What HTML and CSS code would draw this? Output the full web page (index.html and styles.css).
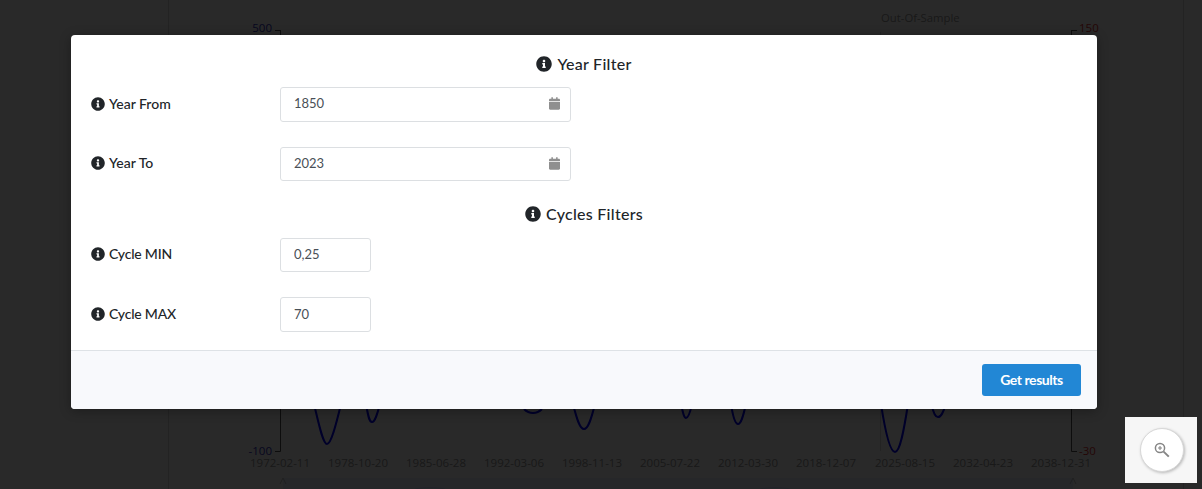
FILE: index.html
```html
<!DOCTYPE html>
<html lang="en">
<head>
<meta charset="utf-8">
<title>Year Filter</title>
<link rel="stylesheet" href="styles.css">
</head>
<body>
<svg class="sprite" width="0" height="0" aria-hidden="true">
  <symbol id="info" viewBox="0 0 512 512"><path d="M256 8C119.043 8 8 119.083 8 256c0 136.997 111.043 248 248 248s248-111.003 248-248C504 119.083 392.957 8 256 8zm0 110c23.196 0 42 18.804 42 42s-18.804 42-42 42-42-18.804-42-42 18.804-42 42-42zm56 254c0 6.627-5.373 12-12 12h-88c-6.627 0-12-5.373-12-12v-24c0-6.627 5.373-12 12-12h12v-64h-12c-6.627 0-12-5.373-12-12v-24c0-6.627 5.373-12 12-12h64c6.627 0 12 5.373 12 12v100h12c6.627 0 12 5.373 12 12v24z"/></symbol>
  <symbol id="calendar" viewBox="0 0 448 512"><path d="M12 192h424c6.6 0 12 5.4 12 12v260c0 26.5-21.5 48-48 48H48c-26.5 0-48-21.5-48-48V204c0-6.6 5.4-12 12-12zm436-44v-36c0-26.5-21.5-48-48-48h-48V12c0-6.6-5.4-12-12-12h-40c-6.6 0-12 5.4-12 12v52H160V12c0-6.6-5.4-12-12-12h-40c-6.6 0-12 5.4-12 12v52H48C21.5 64 0 85.5 0 112v36c0 6.6 5.4 12 12 12h424c6.6 0 12-5.4 12-12z"/></symbol>
</svg>

<svg class="chart" width="1202" height="489" viewBox="0 0 1202 489">
  <g class="navigator">
    <path class="nav-area" d="M283 489V478H1073V489Z"/>
    <path class="nav-handle" d="M283 478L280 484M283 478L286 484M1073 478L1070 484M1073 478L1076 484"/>
    <path class="nav-line" d="M415 489C425 487 435 487 445 489M760 489C770 487 780 487 790 489"/>
  </g>
  <path class="faint" d="M168.5 0V489M1183.5 0V489M880.5 32V451"/>
  <path class="axis" d="M280.5 30V451.5H275M275 30.5H280.5M1071.5 30V451.5H1077M1071.5 30.5H1077"/>
  <g class="curve">
    <path d="M314 404C319 425 323 444 327 444C331 444 336 425 341 404"/>
    <path d="M366 404C368 415 369 422 372 422C375 422 377 415 380 404"/>
    <path d="M524 409C527 412 530 413 533 413C536 413 539 412 542 409"/>
    <path d="M573 404C577 420 580 429 584 429C588 429 591 420 595 404"/>
    <path d="M681 404C683 413 684 418 686 418C688 418 690 413 692 404"/>
    <path d="M731 404C733 417 735 424 738 424C741 424 743 417 746 404"/>
    <path d="M881 404C885 430 890 452 895 452C900 452 904 430 908 404"/>
    <path d="M931 404C934 413 935 417 938 417C941 417 943 413 946 404"/>
  </g>
  <text class="t t-left" x="272" y="32">500</text>
  <text class="t t-left" x="272" y="455">-100</text>
  <text class="t t-right" x="1079" y="32">150</text>
  <text class="t t-right" x="1079" y="455">-30</text>
  <text class="t t-title" x="881" y="22">Out-Of-Sample</text>
  <g class="t">
    <text x="250" y="467">1972-02-11</text>
    <text x="328" y="467">1978-10-20</text>
    <text x="406" y="467">1985-06-28</text>
    <text x="484" y="467">1992-03-06</text>
    <text x="562" y="467">1998-11-13</text>
    <text x="640" y="467">2005-07-22</text>
    <text x="718" y="467">2012-03-30</text>
    <text x="796" y="467">2018-12-07</text>
    <text x="875" y="467">2025-08-15</text>
    <text x="953" y="467">2032-04-23</text>
    <text x="1031" y="467">2038-12-31</text>
  </g>
</svg>

<div class="backdrop"></div>

<main class="modal">
  <div class="modal-body">
    <h2 class="section-title"><svg class="info info-lg"><use href="#info"/></svg>Year Filter</h2>
    <div class="field field-first">
      <label class="label"><svg class="info"><use href="#info"/></svg>Year From</label>
      <div class="control control-date">
        <input class="input" type="text" value="1850">
        <svg class="cal"><use href="#calendar"/></svg>
      </div>
    </div>
    <div class="field field-second">
      <label class="label"><svg class="info"><use href="#info"/></svg>Year To</label>
      <div class="control control-date">
        <input class="input" type="text" value="2023">
        <svg class="cal"><use href="#calendar"/></svg>
      </div>
    </div>
    <h2 class="section-title section-title-second"><svg class="info info-lg"><use href="#info"/></svg>Cycles Filters</h2>
    <div class="field field-third">
      <label class="label label-tight"><svg class="info"><use href="#info"/></svg>Cycle MIN</label>
      <div class="control control-num"><input class="input" type="text" value="0,25"></div>
    </div>
    <div class="field field-fourth">
      <label class="label label-tight"><svg class="info"><use href="#info"/></svg>Cycle MAX</label>
      <div class="control control-num"><input class="input" type="text" value="70"></div>
    </div>
  </div>
  <footer class="modal-footer">
    <button class="btn" type="button">Get results</button>
  </footer>
</main>

<aside class="zoom-box">
  <button class="zoom-btn" type="button" aria-label="Zoom">
    <svg width="18" height="18" viewBox="0 0 18 18">
      <circle cx="7" cy="7" r="4.6" fill="none" stroke="#858585" stroke-width="1.5"/>
      <path d="M10.6 10.6L15.8 15.6" stroke="#858585" stroke-width="2" fill="none"/>
      <path d="M5 7H9M7 5V9" stroke="#858585" stroke-width="1.1" fill="none"/>
    </svg>
  </button>
</aside>
</body>
</html>
```

FILE: styles.css
```css
* { box-sizing: border-box; }

html, body {
  margin: 0;
  height: 100%;
  overflow: hidden;
}

body {
  background: #fff;
  font-family: Lato, "Liberation Sans", sans-serif;
  color: #212529;
}

.sprite { position: absolute; }

.chart {
  position: absolute;
  left: 0;
  top: 0;
}

.faint {
  fill: none;
  stroke: #d8d8d8;
}

.axis {
  fill: none;
  stroke: #555;
}

.nav-area { fill: #e8f2ff; }

.nav-handle {
  fill: none;
  stroke: #c4c4c4;
}

.nav-line {
  fill: none;
  stroke: #d4d8ff;
}

.curve path {
  fill: none;
  stroke: #0000ff;
  stroke-width: 2;
}

.t {
  font-family: "Open Sans", "Liberation Sans", sans-serif;
  font-size: 11.5px;
  fill: #999;
}

.t-left {
  fill: #3030c0;
  text-anchor: end;
}

.t-right { fill: #e03030; }

.t-title { font-size: 11.3px; }

.backdrop {
  position: absolute;
  inset: 0;
  background: rgba(0, 0, 0, 0.84);
}

.modal {
  position: absolute;
  left: 71px;
  top: 35px;
  width: 1026px;
  height: 374px;
  background: #fff;
  border-radius: 4px;
  display: flex;
  flex-direction: column;
  overflow: hidden;
  box-shadow: 0 2px 12px rgba(0, 0, 0, 0.3);
}

.modal-body {
  flex: 1;
  padding: 18px 20px 0;
}

.section-title {
  margin: 0;
  display: flex;
  justify-content: center;
  align-items: center;
  gap: 5px;
  height: 22px;
  font-size: 16px;
  font-weight: 500;
  line-height: 22px;
  letter-spacing: 0.27px;
}

.section-title-second { margin-top: 22px; }

.info {
  width: 14px;
  height: 14px;
  margin-right: 4px;
  fill: #212529;
  flex: none;
}

.info-lg {
  width: 16px;
  height: 16px;
  margin-right: 0;
}

.field {
  display: flex;
  align-items: center;
}

.field-first { margin-top: 12px; }
.field-second { margin-top: 25.1px; }
.field-third { margin-top: 12.5px; }
.field-fourth { margin-top: 25px; }

.label {
  width: 189px;
  flex: none;
  display: flex;
  align-items: center;
  font-size: 14px;
  font-weight: 500;
  line-height: 20px;
  margin-bottom: 1px;
}

.field-third .label { margin-bottom: 2px; }

.label-tight { letter-spacing: -0.22px; }

.control {
  position: relative;
  height: 34.6px;
}

.control-date { width: 291px; }
.control-num { width: 91px; }

.input {
  display: block;
  width: 100%;
  height: 100%;
  padding: 0 13px 2px;
  border: 1px solid #dcdfe2;
  border-radius: 3px;
  background: #fff;
  color: #495057;
  font: 400 13px/20px Lato, "Liberation Sans", sans-serif;
  outline: none;
}

.cal {
  position: absolute;
  right: 11px;
  top: 10px;
  width: 11px;
  height: 13px;
  fill: #8f8f8f;
}

.modal-footer {
  height: 59px;
  flex: none;
  background: #f8f9fc;
  border-top: 1px solid #dee2e6;
  display: flex;
  justify-content: flex-end;
  align-items: flex-start;
  padding: 13px 16px 0;
}

.btn {
  width: 99px;
  height: 32px;
  border: 0;
  border-radius: 3px;
  background: #2287d5;
  color: #fff;
  font: 700 14px/20px Lato, "Liberation Sans", sans-serif;
  letter-spacing: -0.45px;
  padding: 0;
}

.zoom-box {
  position: absolute;
  left: 1125px;
  top: 417px;
  width: 72px;
  height: 66px;
  background: #f6f6f6;
  display: flex;
  align-items: center;
  justify-content: center;
  padding: 0 0 0 2px;
}

.zoom-btn {
  width: 44px;
  height: 44px;
  border-radius: 50%;
  border: 1px solid #d8d8d8;
  background: #fff;
  padding: 0;
  display: flex;
  align-items: center;
  justify-content: center;
  box-shadow: 1px 1px 3px rgba(0, 0, 0, 0.25);
}
```
